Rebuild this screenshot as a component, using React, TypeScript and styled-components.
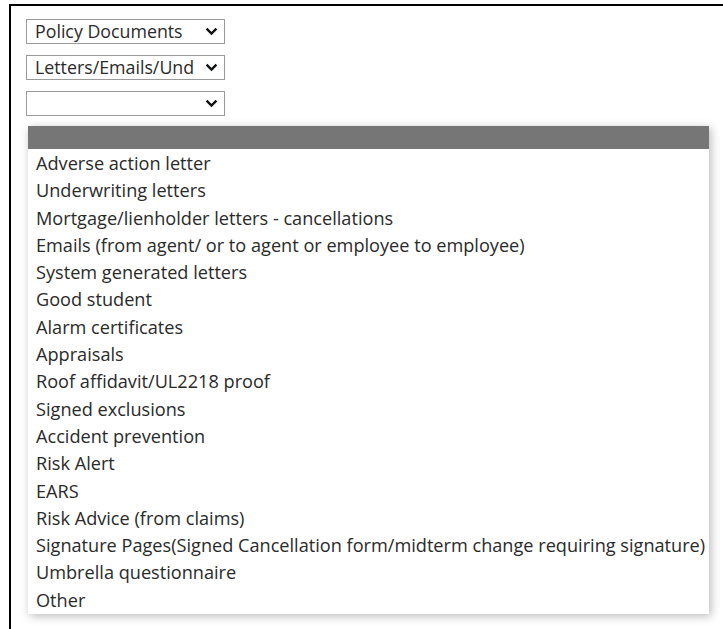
import React from "react";
import styled, { createGlobalStyle } from "styled-components";

const Global = createGlobalStyle`
  html, body {
    margin: 0;
    padding: 0;
    background: #ffffff;
    overflow: hidden;
  }
  body {
    font-family: "Open Sans", "Noto Sans", sans-serif;
  }
`;

const Frame = styled.div`
  margin: 4px 0 0 9px;
  width: 714px;
  height: 625px;
  border-top: 2px solid #000;
  border-left: 2px solid #000;
  padding: 13px 0 0 15px;
  box-sizing: border-box;
`;

const Stack = styled.div`
  display: flex;
  flex-direction: column;
  gap: 11px;
  align-items: flex-start;
`;

const SelectBox = styled.div`
  width: 199px;
  height: 25px;
  box-sizing: border-box;
  border: 1px solid #9a9a9a;
  background: #fff;
  display: flex;
  align-items: center;
  padding: 0 6px 0 8px;
  font-size: 17.8px;
  line-height: 23px;
  color: #2a2a2a;
  gap: 3px;
`;

const SelectValue = styled.span`
  flex: 1;
  overflow: hidden;
  white-space: nowrap;
`;

const Chevron = () => (
  <svg width="13" height="9" viewBox="0 0 13 9">
    <path d="M1.6 1.6 L6.5 6.5 L11.4 1.6" fill="none" stroke="#111" strokeWidth="2.4" />
  </svg>
);

const Popup = styled.div`
  margin: 10px 0 0 2px;
  width: 681px;
  background: #fff;
  box-shadow: 2px 2px 9px rgba(0, 0, 0, 0.28);
  display: flex;
  flex-direction: column;
  padding-bottom: 1px;
`;

const Highlight = styled.div`
  height: 23px;
  background: #767676;
`;

const Option = styled.div`
  height: 27.3px;
  line-height: 28px;
  padding-left: 8px;
  font-size: 18.15px;
  color: #2a2a2a;
  white-space: nowrap;
`;

const options = [
  "Adverse action letter",
  "Underwriting letters",
  "Mortgage/lienholder letters - cancellations",
  "Emails (from agent/ or to agent or employee to employee)",
  "System generated letters",
  "Good student",
  "Alarm certificates",
  "Appraisals",
  "Roof affidavit/UL2218 proof",
  "Signed exclusions",
  "Accident prevention",
  "Risk Alert",
  "EARS",
  "Risk Advice (from claims)",
  "Signature Pages(Signed Cancellation form/midterm change requiring signature)",
  "Umbrella questionnaire",
  "Other",
];

export default function App() {
  return (
    <>
      <Global />
      <Frame>
        <Stack>
          <SelectBox>
            <SelectValue>Policy Documents</SelectValue>
            <Chevron />
          </SelectBox>
          <SelectBox>
            <SelectValue>Letters/Emails/Und</SelectValue>
            <Chevron />
          </SelectBox>
          <SelectBox>
            <SelectValue />
            <Chevron />
          </SelectBox>
        </Stack>
        <Popup>
          <Highlight />
          {options.map((o) => (
            <Option key={o}>{o}</Option>
          ))}
        </Popup>
      </Frame>
    </>
  );
}
